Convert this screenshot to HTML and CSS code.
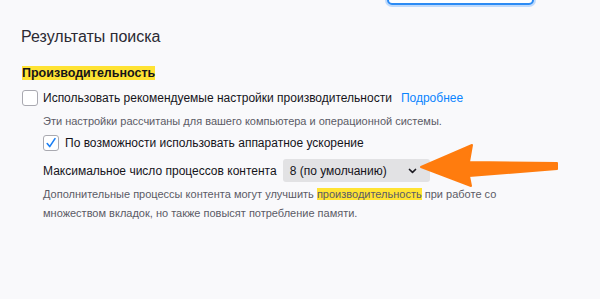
FILE: index.html
```html
<!DOCTYPE html>
<html lang="ru">
<head>
    <meta charset="UTF-8">
    <meta name="viewport" content="width=device-width, initial-scale=1.0">
    <title>Настройки - Производительность</title>
    <link rel="stylesheet" href="styles.css">
</head>
<body>
    <div class="page">
        <div class="search-box"></div>

        <h1 class="search-title">Результаты поиска</h1>

        <section class="group">
            <h2 class="group-title"><span class="hl">Производительность</span></h2>

            <label class="check-row">
                <span class="checkbox"></span>
                <span class="check-label">Использовать рекомендуемые настройки производительности</span>
                <a class="learn-more" href="#">Подробнее</a>
            </label>

            <div class="sub">
                <p class="hint">Эти настройки рассчитаны для вашего компьютера и операционной системы.</p>

                <label class="check-row">
                    <span class="checkbox checked">
                        <svg width="12" height="12" viewBox="0 0 12 12">
                            <path d="M2.2 6.6 L4.7 9.6 L10 1.6" fill="none" stroke="#1a7ff5" stroke-width="1.6" stroke-linecap="round" stroke-linejoin="round"/>
                        </svg>
                    </span>
                    <span class="check-label">По возможности использовать аппаратное ускорение</span>
                </label>

                <div class="select-row">
                    <span class="select-label">Максимальное число процессов контента</span>
                    <div class="select">
                        <span>8 (по умолчанию)</span>
                        <svg width="9" height="6" viewBox="0 0 9 6">
                            <path d="M1.5 1.5 L4.5 4.3 L7.5 1.5" fill="none" stroke="#1c1b22" stroke-width="1.7" stroke-linecap="round" stroke-linejoin="round"/>
                        </svg>
                    </div>
                </div>

                <p class="hint desc">Дополнительные процессы контента могут улучшить <span class="hl">производительность</span> при работе со множеством вкладок, но также повысят потребление памяти.</p>
            </div>
        </section>
    </div>

    <!-- annotation arrow drawn over the page -->
    <svg class="arrow" width="600" height="299" viewBox="0 0 600 299">
        <polygon points="421,167 472,145 469,162 557,163 557,169 469,176 471,186"
                 fill="#ff7c0e" stroke="#ff7c0e" stroke-width="2" stroke-linejoin="round"/>
    </svg>
</body>
</html>
```

FILE: styles.css
```css
:root {
    --page-bg: #f9f9fb;
    --text: #15141a;
    --muted: #5b5b66;
    --link: #0a84ff;
    --highlight: #ffe333;
}

body {
    margin: 0;
    background: var(--page-bg);
    font-family: "Liberation Sans", Arial, sans-serif;
    color: var(--text);
    height: 299px;
    overflow: hidden;
}

.page {
    padding: 0 0 0 22px;
}

.search-box {
    width: 143px;
    height: 26px;
    margin: -25px 0 0 365px;
    border: 2px solid #2d8cf4;
    border-radius: 5px;
    background: #fff;
    box-shadow: 0 0 0 2px rgba(80, 160, 255, 0.35);
}

.search-title {
    margin: 22px 0 0 -1px;
    font-size: 16px;
    line-height: 20px;
    font-weight: normal;
    color: #2b2a33;
}

.group-title {
    margin: 18px 0 0;
    font-size: 12.5px;
    line-height: 16px;
    font-weight: bold;
}

.hl {
    background: var(--highlight);
}

.check-row {
    display: flex;
    align-items: center;
    height: 18px;
    margin-top: 8px;
    font-size: 12px;
    line-height: 18px;
}

.checkbox {
    width: 14px;
    height: 14px;
    border: 1px solid #a9a9b0;
    border-radius: 3px;
    background: #fff;
    margin-right: 5px;
    display: flex;
    align-items: center;
    justify-content: center;
    flex: none;
}

.learn-more {
    margin-left: 9px;
    color: var(--link);
    text-decoration: none;
}

.sub {
    padding-left: 21px;
}

.hint {
    margin: 6px 0 0;
    font-size: 11px;
    line-height: 16px;
    color: var(--muted);
}

.sub .check-row {
    margin-top: 5px;
}

.sub .checkbox {
    margin-right: 6px;
}

.select-row {
    display: flex;
    align-items: center;
    gap: 6px;
    margin-top: 7px;
    font-size: 12px;
}

.select {
    width: 147px;
    height: 23px;
    box-sizing: border-box;
    padding: 0 13px 0 7px;
    border-radius: 3px;
    background: #e2e2e4;
    display: flex;
    align-items: center;
    justify-content: space-between;
}

.desc {
    margin-top: 3px;
    line-height: 19px;
    width: 470px;
}

.arrow {
    position: absolute;
    left: 0;
    top: 0;
    pointer-events: none;
}
```
